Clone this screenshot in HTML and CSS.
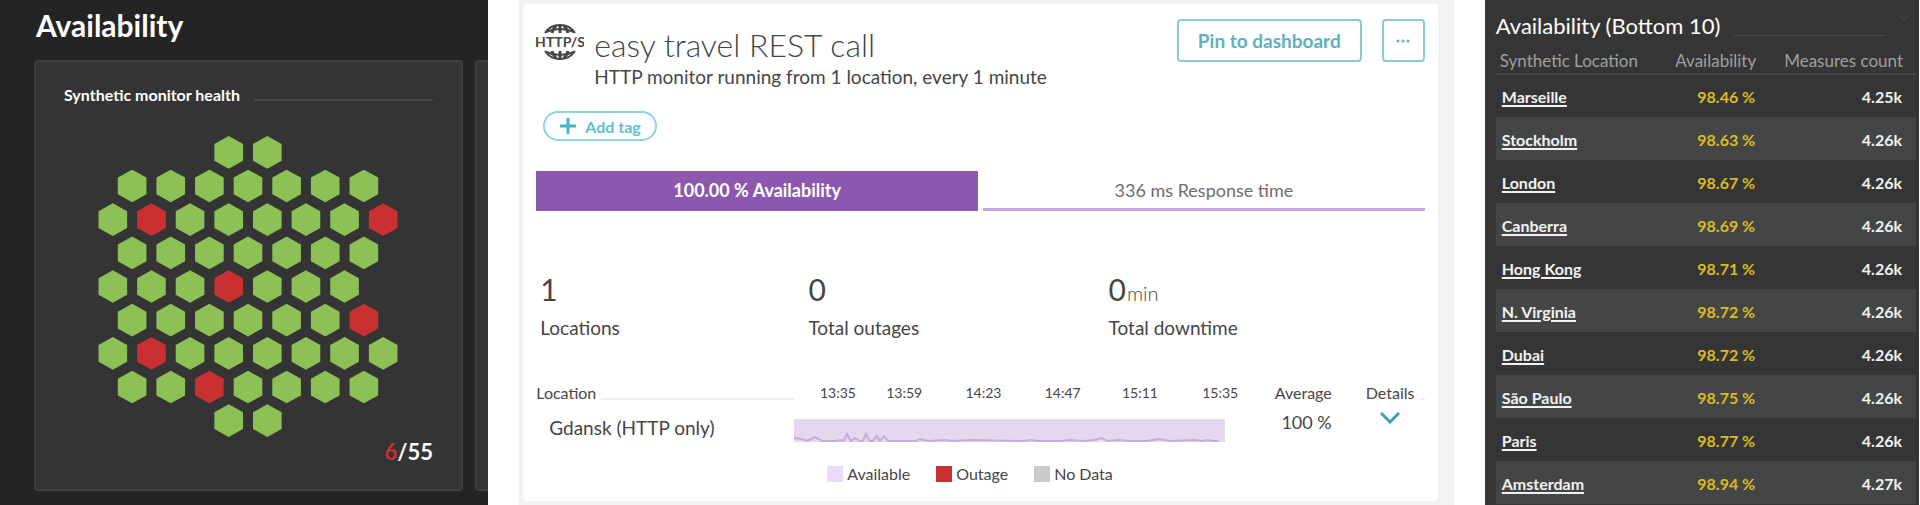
FILE: index.html
```
<!DOCTYPE html>
<html lang="en">
<head>
    <meta charset="UTF-8">
    <title>Synthetic monitoring</title>
    <link rel="stylesheet" href="styles.css">
</head>
<body>
    <main class="page">
        <section class="health">
            <h1>Availability</h1>
            <div class="tiles">
                <article class="tile">
                    <h2>Synthetic monitor health</h2>
                    <svg class="honeycomb" viewBox="0 0 900 904" role="img" aria-label="6 of 55 monitors unhealthy">
                        <defs>
                            <path id="hex" d="M0 -49 L43 -25 V25 L0 49 L-43 25 V-25 Z"/>
                        </defs>
                        <g transform="translate(44 49)">
                            <use href="#hex" x="348"/><use href="#hex" x="464"/>
                        </g>
                        <g transform="translate(102 150)">
                            <use href="#hex" x="0"/><use href="#hex" x="116"/><use href="#hex" x="232"/><use href="#hex" x="348"/>
                            <use href="#hex" x="464"/><use href="#hex" x="580"/><use href="#hex" x="696"/>
                        </g>
                        <g transform="translate(44 251)">
                            <use href="#hex" x="0"/><use href="#hex" x="116" class="down"/><use href="#hex" x="232"/><use href="#hex" x="348"/>
                            <use href="#hex" x="464"/><use href="#hex" x="580"/><use href="#hex" x="696"/><use href="#hex" x="812" class="down"/>
                        </g>
                        <g transform="translate(102 351)">
                            <use href="#hex" x="0"/><use href="#hex" x="116"/><use href="#hex" x="232"/><use href="#hex" x="348"/>
                            <use href="#hex" x="464"/><use href="#hex" x="580"/><use href="#hex" x="696"/>
                        </g>
                        <g transform="translate(44 452)">
                            <use href="#hex" x="0"/><use href="#hex" x="116"/><use href="#hex" x="232"/><use href="#hex" x="348" class="down"/>
                            <use href="#hex" x="464"/><use href="#hex" x="580"/><use href="#hex" x="696"/>
                        </g>
                        <g transform="translate(102 553)">
                            <use href="#hex" x="0"/><use href="#hex" x="116"/><use href="#hex" x="232"/><use href="#hex" x="348"/>
                            <use href="#hex" x="464"/><use href="#hex" x="580"/><use href="#hex" x="696" class="down"/>
                        </g>
                        <g transform="translate(44 653)">
                            <use href="#hex" x="0"/><use href="#hex" x="116" class="down"/><use href="#hex" x="232"/><use href="#hex" x="348"/>
                            <use href="#hex" x="464"/><use href="#hex" x="580"/><use href="#hex" x="696"/><use href="#hex" x="812"/>
                        </g>
                        <g transform="translate(102 754)">
                            <use href="#hex" x="0"/><use href="#hex" x="116"/><use href="#hex" x="232" class="down"/><use href="#hex" x="348"/>
                            <use href="#hex" x="464"/><use href="#hex" x="580"/><use href="#hex" x="696"/>
                        </g>
                        <g transform="translate(44 855)">
                            <use href="#hex" x="348"/><use href="#hex" x="464"/>
                        </g>
                    </svg>
                    <p class="ratio"><span class="bad">6</span>/55</p>
                </article>
                <article class="tile next-tile"></article>
            </div>
        </section>

        <section class="monitor">
            <div class="card">
                <header class="card-header">
                    <svg class="http-icon" viewBox="0 0 48 38" aria-hidden="true">
                        <g fill="none" stroke="#454646" stroke-width="2">
                            <path d="M9 10 Q14 2 24 2 T39 10"/>
                            <path d="M9 28 Q14 36 24 36 T39 28"/>
                            <path d="M10 9 Q24 3 38 9 M10 29 Q24 35 38 29"/>
                            <path d="M24 2 V10 M24 28 V36" stroke-width="3"/>
                            <path d="M20 3 Q17 6 16 10 M28 3 Q31 6 32 10 M20 35 Q17 32 16 28 M28 35 Q31 32 32 28" stroke-width="3"/>
                        </g>
                        <text x="24" y="24" text-anchor="middle">HTTP/S</text>
                    </svg>
                    <div class="headline">
                        <h2>easy travel REST call</h2>
                        <p>HTTP monitor running from 1 location, every 1 minute</p>
                    </div>
                    <button class="outline pin">Pin to dashboard</button>
                    <button class="outline more" aria-label="More">
                        <svg width="14" height="4" viewBox="0 0 14 4"><circle cx="2" cy="2" r="1.5"/><circle cx="7" cy="2" r="1.5"/><circle cx="12" cy="2" r="1.5"/></svg>
                    </button>
                </header>

                <button class="add-tag">
                    <svg width="16" height="16" viewBox="0 0 16 16"><path d="M8 0V16M0 8H16"/></svg>
                    Add tag
                </button>

                <nav class="tabs">
                    <button class="tab active">100.00 % Availability</button>
                    <button class="tab">336 ms Response time</button>
                </nav>

                <dl class="metrics">
                    <div><dd>1</dd><dt>Locations</dt></div>
                    <div><dd>0</dd><dt>Total outages</dt></div>
                    <div><dd>0<small>min</small></dd><dt>Total downtime</dt></div>
                </dl>

                <table class="locations">
                    <thead>
                        <tr>
                            <th class="col-location"><span class="ruled">Location</span></th>
                            <th class="col-chart">
                                <div class="times"><span>13:35</span><span>13:59</span><span>14:23</span><span>14:47</span><span>15:11</span><span>15:35</span></div>
                            </th>
                            <th class="col-average">Average</th>
                            <th class="col-details"><span class="ruled">Details</span></th>
                        </tr>
                    </thead>
                    <tbody>
                        <tr>
                            <td class="name">Gdansk (HTTP only)</td>
                            <td>
                                <svg class="chart" viewBox="0 0 432 23" preserveAspectRatio="none" aria-hidden="true">
                                    <path d="M0 19 L7 20 L13 22 L21 18 L28 22 L42 22 L47 21 L50 22 L53 15 L57 22 L61 19 L66 22 L69 22 L72 15 L76 22 L79 22 L83 17 L86 22 L90 17 L94 22 L122 22 L126 20 L134 22 L151 21 L158 22 L178 21 L230 22 L238 21 L245 22 L268 22 L276 21 L290 22 L302 21 L308 19 L314 22 L325 21 L336 22 L353 22 L366 20 L376 22 L402 21 L409 22 L414 21 L420 22 L425 22"/>
                                </svg>
                            </td>
                            <td class="average">100 %</td>
                            <td class="details">
                                <button class="expand" aria-label="Show details">
                                    <svg width="20" height="12" viewBox="0 0 20 12"><path d="M1 1 L10 10 L19 1"/></svg>
                                </button>
                            </td>
                        </tr>
                    </tbody>
                </table>

                <ul class="legend">
                    <li class="available">Available</li>
                    <li class="outage">Outage</li>
                    <li class="no-data">No Data</li>
                </ul>
            </div>
        </section>

        <section class="bottom">
            <header class="bottom-header">
                <h2>Availability (Bottom 10)</h2>
                <svg width="12" height="7" viewBox="0 0 12 7" aria-hidden="true"><path d="M1 1 L6 6 L11 1"/></svg>
            </header>
            <table class="ranking">
                <thead>
                    <tr><th>Synthetic Location</th><th>Availability</th><th>Measures count</th></tr>
                </thead>
                <tbody>
                    <tr><td><a href="#">Marseille</a></td><td>98.46 %</td><td>4.25k</td></tr>
                    <tr><td><a href="#">Stockholm</a></td><td>98.63 %</td><td>4.26k</td></tr>
                    <tr><td><a href="#">London</a></td><td>98.67 %</td><td>4.26k</td></tr>
                    <tr><td><a href="#">Canberra</a></td><td>98.69 %</td><td>4.26k</td></tr>
                    <tr><td><a href="#">Hong Kong</a></td><td>98.71 %</td><td>4.26k</td></tr>
                    <tr><td><a href="#">N. Virginia</a></td><td>98.72 %</td><td>4.26k</td></tr>
                    <tr><td><a href="#">Dubai</a></td><td>98.72 %</td><td>4.26k</td></tr>
                    <tr><td><a href="#">São Paulo</a></td><td>98.75 %</td><td>4.26k</td></tr>
                    <tr><td><a href="#">Paris</a></td><td>98.77 %</td><td>4.26k</td></tr>
                    <tr><td><a href="#">Amsterdam</a></td><td>98.94 %</td><td>4.27k</td></tr>
                </tbody>
            </table>
        </section>
    </main>
</body>
</html>
```
FILE: styles.css
```
* {
    box-sizing: border-box;
}
body {
    margin: 0;
    background-color: #ffffff;
    font-family: Lato, "Open Sans", sans-serif;
    font-size: 19px;
    color: #454646;
}
h1, h2, p, dl, dd, ul {
    margin: 0;
    padding: 0;
}
button {
    font-family: inherit;
    cursor: pointer;
}
table {
    border-collapse: collapse;
    width: 100%;
}
.page {
    display: grid;
    grid-template-columns: 488fr 934fr 434fr;
    column-gap: 31px;
    padding-right: 1px;
    min-height: 100vh;
}

/* Monitor health */
.health {
    background-color: #242424;
    color: #ffffff;
    padding: 7px 0 13px 34px;
    overflow: hidden;
}
.health h1 {
    font-size: 30px;
    line-height: 36px;
    padding-left: 2px;
    margin-bottom: 17px;
}
.tiles {
    display: flex;
    gap: 12px;
}
.tile {
    flex: 0 0 429px;
    background-color: #343434;
    border: 2px solid #3e3e3e;
    border-radius: 4px;
    padding: 21px 28px 22px;
}
.next-tile {
    border-right: 0;
}
.tile h2 {
    display: flex;
    gap: 14px;
    font-size: 16px;
    line-height: 24px;
}
.tile h2::after {
    content: "";
    flex: 1;
    height: 2px;
    margin-top: 16px;
    background-color: #444444;
}
.honeycomb {
    display: block;
    width: 300px;
    height: 301px;
    margin: 29px auto 0 34px;
    fill: #8dc155;
}
.down {
    fill: #c93032;
}
.ratio {
    text-align: right;
    font-size: 22px;
    font-weight: bold;
    line-height: 30px;
}
.bad {
    color: #c93032;
}

/* Monitor details */
.monitor {
    background-color: #f2f2f2;
    padding: 4px 16px 4px 4px;
}
.card {
    height: 100%;
    background-color: #ffffff;
    border-radius: 4px;
    padding: 15px 13px 10px;
}
.card-header {
    display: flex;
    align-items: flex-start;
}
.http-icon {
    width: 48px;
    height: 38px;
    margin-top: 4px;
}
.http-icon text {
    font-size: 14px;
    font-weight: bold;
    fill: #454646;
}
.headline {
    flex: 1;
    padding: 6px 0 0 10px;
}
.headline h2 {
    font-size: 32px;
    font-weight: 300;
    line-height: 40px;
}
.headline p {
    line-height: 24px;
}
.outline {
    height: 43px;
    background-color: #ffffff;
    border: 2px solid #8ccad3;
    border-radius: 4px;
    color: #5eb1c0;
    fill: #5eb1c0;
    font-size: 19px;
    font-weight: bold;
}
.pin {
    width: 185px;
    margin-right: 20px;
}
.more {
    width: 43px;
    padding: 0;
}
.more svg {
    display: block;
    margin: 0 auto;
}
.add-tag {
    display: flex;
    align-items: center;
    gap: 9px;
    width: 114px;
    height: 30px;
    margin: 22px 0 30px 7px;
    padding: 0 15px;
    background-color: #ffffff;
    border: 2px solid #8fd5e0;
    border-radius: 15px;
    color: #61c0d0;
    font-size: 16px;
    font-weight: bold;
    white-space: nowrap;
}
.add-tag svg {
    flex: none;
    stroke: #45b4c8;
    stroke-width: 3;
}
.tabs {
    display: flex;
    gap: 5px;
}
.tab {
    flex: 1;
    height: 40px;
    background-color: #ffffff;
    border: 0;
    border-bottom: 3px solid #c9a6de;
    color: #6d6d6d;
    font-size: 18px;
}
.tab.active {
    background-color: #8c58af;
    border-color: #8c58af;
    color: #ffffff;
    font-weight: bold;
}
.metrics {
    display: grid;
    grid-template-columns: 268fr 300fr 316fr;
    padding: 59px 0 0 4px;
}
.metrics div {
    display: flex;
    flex-direction: column;
}
.metrics dd {
    font-size: 30px;
    line-height: 38px;
}
.metrics small {
    font-size: 20px;
    font-weight: 300;
    line-height: 24px;
    margin-left: 1px;
}
.metrics dt {
    line-height: 24px;
    margin-top: 8px;
}
.locations {
    table-layout: fixed;
    margin-top: 41px;
}
.locations th {
    padding: 0 0 5px;
    font-size: 16px;
    font-weight: normal;
    line-height: 24px;
    text-align: left;
}
.col-location {
    width: 29%;
}
.col-average {
    width: 12%;
}
.locations .col-average {
    text-align: right;
}
.col-details {
    width: 93px;
}
.locations .col-details {
    padding-left: 34px;
}
.ruled {
    display: flex;
    gap: 5px;
}
.ruled::after {
    content: "";
    flex: 1;
    height: 2px;
    margin-top: 17px;
    background-color: #eef0f0;
}
/* last label runs past the end of the chart */
.times {
    display: grid;
    grid-template-columns: 67fr 80fr 80fr 78fr 81fr 33fr;
    margin: 0 -13px 0 26px;
    font-size: 14px;
}
.locations td {
    padding: 9px 0 0;
    height: 32px;
    vertical-align: top;
}
.locations .name {
    padding: 6px 0 0 13px;
    line-height: 24px;
}
.chart {
    display: block;
    width: 100%;
    height: 23px;
    background-color: #e4d8ee;
    fill: none;
    stroke: #c9a9e0;
    stroke-width: 2;
}
.locations .average {
    padding-top: 0;
    text-align: right;
    font-size: 18px;
    line-height: 24px;
}
.locations .details {
    padding: 2px 0 0 48px;
}
.expand {
    display: block;
    padding: 0;
    background: none;
    border: 0;
}
.expand svg {
    display: block;
    fill: none;
    stroke: #3ba1b3;
    stroke-width: 3;
}
.legend {
    display: flex;
    gap: 26px;
    margin-top: 20px;
    padding-left: 291px;
    list-style: none;
    font-size: 16px;
    line-height: 24px;
}
.legend li {
    display: flex;
    align-items: center;
    gap: 4px;
}
.legend li::before {
    content: "";
    width: 16px;
    height: 16px;
}
.available::before {
    background-color: #eadbf8;
}
.outage::before {
    background-color: #c93032;
}
.no-data::before {
    background-color: #cbcbcb;
}

/* Bottom 10 */
.bottom {
    background-color: #353535;
    color: #f2f2f2;
    padding: 11px 3px 0 11px;
}
.bottom-header {
    display: flex;
    padding-right: 6px;
}
.bottom-header h2 {
    flex: 1;
    display: flex;
    gap: 14px;
    font-size: 22px;
    font-weight: normal;
    line-height: 30px;
    color: #ffffff;
}
.bottom-header h2::after {
    content: "";
    flex: 1;
    height: 1px;
    margin: 24px 12px 0 0;
    background-color: #4a4a4a;
}
.bottom-header svg {
    margin-top: 3px;
    fill: none;
    stroke: #505050;
}
.ranking th {
    height: 33px;
    padding: 7px 13px 0 4px;
    border-bottom: 2px solid #454545;
    color: #a0a0a0;
    font-size: 17px;
    font-weight: normal;
    text-align: right;
}
.ranking td {
    height: 43px;
    padding: 1px 14px 0 6px;
    font-size: 16px;
    font-weight: bold;
    text-align: right;
}
.ranking th:first-child,
.ranking td:first-child {
    text-align: left;
}
.ranking td:nth-child(2) {
    color: #dcbc22;
}
.ranking tbody tr:nth-child(even) {
    background-color: #444645;
}
.ranking a {
    color: #f2f2f2;
    text-underline-offset: 2px;
    text-decoration-thickness: 2px;
}
```
